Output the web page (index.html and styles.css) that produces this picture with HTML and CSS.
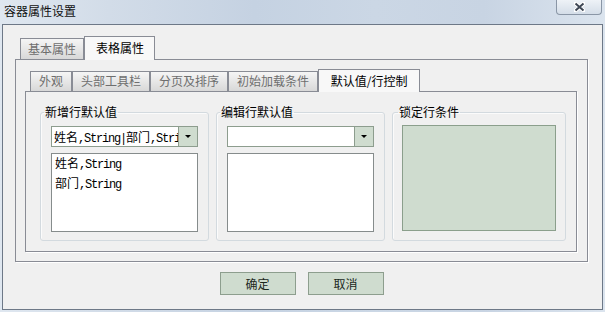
FILE: index.html
```html
<!DOCTYPE html>
<html lang="zh-CN">
<head>
<meta charset="utf-8">
<title>容器属性设置</title>
<link rel="stylesheet" href="styles.css">
</head>
<body>
<div class="window">
  <div class="titlebar">
    <span class="title">容器属性设置</span>
    <div class="close">
      <svg width="11" height="10" viewBox="0 0 11 10">
        <path d="M1.5 1.5 L9.5 8.5 M9.5 1.5 L1.5 8.5" stroke="#ffffff" stroke-width="4" stroke-linecap="round"/>
        <path d="M1.5 1.5 L9.5 8.5 M9.5 1.5 L1.5 8.5" stroke="#3d4654" stroke-width="2"/>
      </svg>
    </div>
  </div>
  <div class="client">
    <div class="tabs outer-tabs">
      <div class="tab">基本属性</div>
      <div class="tab active">表格属性</div>
    </div>
    <div class="panel outer-panel">
      <div class="tabs inner-tabs">
        <div class="tab">外观</div>
        <div class="tab">头部工具栏</div>
        <div class="tab">分页及排序</div>
        <div class="tab">初始加载条件</div>
        <div class="tab active">默认值/行控制</div>
      </div>
      <div class="panel inner-panel">
        <fieldset class="group g1">
          <legend>新增行默认值</legend>
          <div class="combo">
            <div class="combo-text">姓名<span class="lat">,String|</span>部门<span class="lat">,String</span></div>
            <div class="combo-btn"><span class="arrow"></span></div>
          </div>
          <div class="list">
            <div class="item">姓名<span class="lat">,String</span></div>
            <div class="item">部门<span class="lat">,String</span></div>
          </div>
        </fieldset>
        <fieldset class="group g2">
          <legend>编辑行默认值</legend>
          <div class="combo">
            <div class="combo-text"></div>
            <div class="combo-btn"><span class="arrow"></span></div>
          </div>
          <div class="list"></div>
        </fieldset>
        <fieldset class="group g3">
          <legend>锁定行条件</legend>
          <div class="cond-box"></div>
        </fieldset>
      </div>
    </div>
    <div class="buttons">
      <button class="btn">确定</button>
      <button class="btn">取消</button>
    </div>
  </div>
</div>
</body>
</html>
```

FILE: styles.css
```css
* { box-sizing: border-box; }

body {
  margin: 0;
  width: 605px;
  height: 312px;
  overflow: hidden;
  font-family: "Noto Sans CJK SC", "Noto Sans", sans-serif;
  font-size: 12px;
  color: #000;
}

.window {
  height: 312px;
  display: flex;
  flex-direction: column;
  background: linear-gradient(90deg, #dfe7f0 0%, #d2dce8 18%, #c5d2e2 42%, #cbd7e5 62%, #c8d4e3 80%, #dbe4ee 100%);
}

.titlebar {
  height: 24px;
  flex: none;
  display: flex;
  justify-content: space-between;
  align-items: flex-start;
  padding: 0 3px 0 4px;
}

.title {
  margin-top: 3px;
  line-height: 16px;
  color: #111;
}

.close {
  width: 46px;
  height: 15px;
  border: 1px solid #8a96a6;
  border-top: none;
  border-radius: 0 0 4px 4px;
  background: linear-gradient(#eef2f7, #d4dde8);
  display: flex;
  align-items: center;
  justify-content: center;
  padding-bottom: 1px;
}

.client {
  flex: 1;
  margin: 0 2px 2px;
  border: 1px solid #6d7887;
  background: #f0f0f0;
  padding: 11px 14px 0 12px;
  display: flex;
  flex-direction: column;
}

/* tabs */
.tabs {
  display: flex;
  align-items: flex-end;
  flex: none;
}

.outer-tabs { height: 23px; padding-left: 5px; }
.inner-tabs { height: 22px; padding-left: 5px; }

.tab {
  border: 1px solid #898c95;
  border-bottom: none;
  background: linear-gradient(#f5f5f5, #d8d8d8);
  color: #6e6e6e;
  white-space: nowrap;
}

.outer-tabs .tab { height: 21px; line-height: 19px; padding: 0 7px; }
.inner-tabs .tab { height: 20px; line-height: 18px; padding: 0 8px; }

.tabs .tab.active {
  position: relative;
  z-index: 1;
  background: #f8f8f8;
  color: #000;
  margin-bottom: -1px;
}

.outer-tabs .tab.active { height: 24px; line-height: 22px; padding: 0 10px 0 11px; }
.inner-tabs .tab.active { height: 23px; line-height: 21px; width: 102px; padding: 0; text-align: center; }

.panel {
  border: 1px solid #898c95;
  box-shadow: 1px 1px 0 #ffffff;
  background: #f0f0f0;
}

.outer-panel {
  height: 203px;
  padding: 9px 10px 0 9px;
  display: flex;
  flex-direction: column;
}

.inner-panel {
  height: 161px;
  display: flex;
  gap: 7px;
  padding: 12px 10px 10px 14px;
}

/* group boxes */
.group {
  margin: 0;
  min-width: 0;
  border: 1px solid #d3dadf;
  border-radius: 3px;
  box-shadow: inset 1px 1px 0 #fbfbfb;
  padding: 6px 10px 8px 10px;
  display: flex;
  flex-direction: column;
  gap: 6px;
}

.g1, .g2 { width: 169px; }
.g3 { width: 174px; padding: 5px 9px 9px 9px; }

.group legend {
  padding: 0 1px;
  margin-left: -7px;
  line-height: 16px;
  color: #000;
}

.g3 legend { margin-left: -4px; }

.lat {
  font-family: "Liberation Mono", monospace;
  font-size: 12px;
  letter-spacing: -1.2px;
}

.combo {
  height: 21px;
  flex: none;
  display: flex;
  border: 1px solid #8d9d8e;
  background: #fff;
}

.combo-text {
  flex: 1;
  min-width: 0;
  overflow: hidden;
  white-space: nowrap;
  line-height: 19px;
  padding-left: 2px;
}

.combo-btn {
  width: 19px;
  flex: none;
  border-left: 1px solid #8d9d8e;
  background: #cfdccf;
  display: flex;
  align-items: center;
  justify-content: center;
}

.arrow {
  width: 0;
  height: 0;
  border-left: 3px solid transparent;
  border-right: 3px solid transparent;
  border-top: 3px solid #000;
}

.list {
  flex: 1;
  border: 1px solid #868c8c;
  background: #fff;
  padding: 0 3px;
}

.item { line-height: 18px; }

.cond-box {
  flex: 1;
  border: 1px solid #8b9f8c;
  background: #cfdccf;
}

/* buttons */
.buttons {
  display: flex;
  justify-content: center;
  gap: 12px;
  margin-top: 10px;
}

.btn {
  width: 76px;
  height: 23px;
  border: 1px solid #8d9e8e;
  background: #cfdccf;
  font-family: "Noto Sans CJK SC", sans-serif;
  font-size: 12px;
  color: #1c281c;
  padding: 0;
}
```
